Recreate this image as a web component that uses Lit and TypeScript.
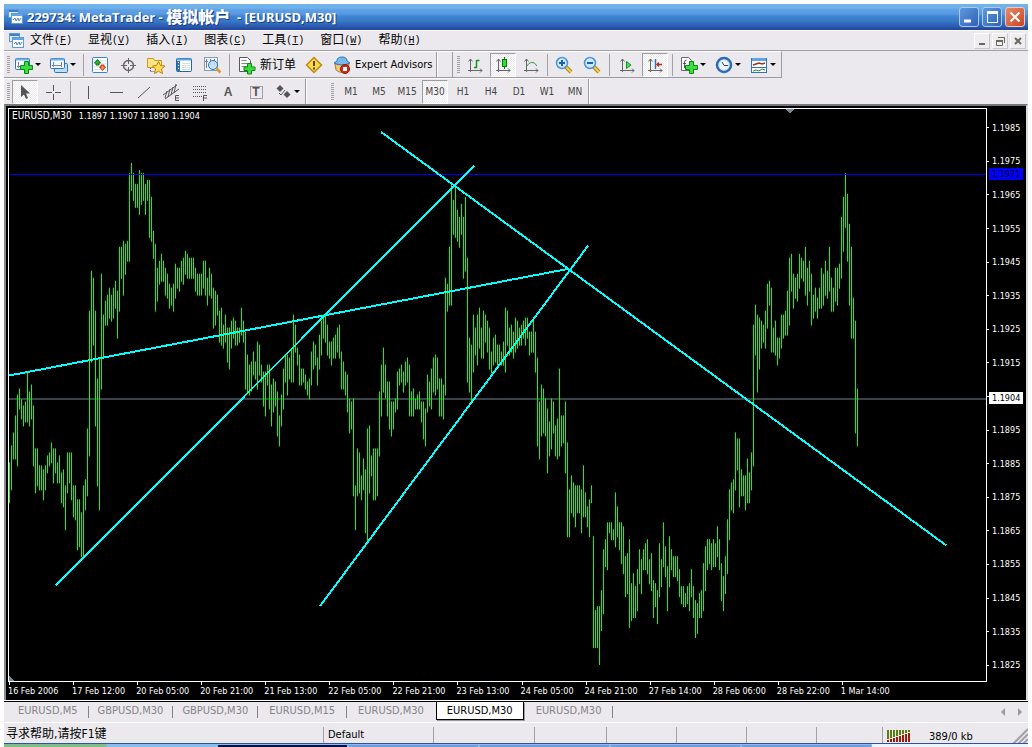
import { LitElement, html, css, svg, nothing, TemplateResult } from "lit";
import { customElement, property } from "lit/decorators.js";
import { classMap } from "lit/directives/class-map.js";

/* High/low pairs of every candle, oldest first, in chart canvas units. */
const BARS: number[] = [
  463,504,446,491,433,460,416,460,395,467,389,410,400,420,406,427,402,423,372,423,392,427,385,420,406,467,449,494,449,487,
  466,491,466,491,470,501,466,491,456,474,453,467,443,464,449,484,449,474,463,484,456,484,473,504,470,508,486,531,453,494,
  453,484,453,501,486,518,486,521,500,551,500,548,513,558,486,558,480,511,429,497,311,457,271,363,278,346,311,427,379,487,
  358,511,274,390,315,357,301,326,295,326,288,319,295,322,288,319,281,309,291,339,247,312,247,279,241,296,244,275,241,262,
  173,262,163,191,173,201,184,208,184,208,170,215,173,205,173,201,184,215,180,201,180,238,197,242,231,259,244,312,268,302,
  261,285,254,282,261,282,268,296,274,299,284,309,288,306,284,312,264,299,268,289,268,292,261,282,258,285,251,275,254,279,
  258,279,258,279,258,279,268,292,274,296,274,296,274,296,261,289,261,296,278,306,268,296,274,299,288,329,291,326,295,316,
  311,343,308,346,325,349,315,343,328,363,328,370,321,349,318,339,321,346,328,346,328,343,308,336,321,343,332,390,355,394,
  365,396,362,392,352,376,362,380,342,390,345,376,365,383,372,407,372,417,365,386,365,410,385,427,379,413,382,407,392,437,
  416,447,395,427,369,410,355,383,355,396,358,380,349,383,315,383,325,353,348,366,355,386,369,386,369,383,375,390,382,396,
  379,400,352,386,342,370,345,366,358,386,335,370,321,356,315,339,315,343,325,356,342,359,342,366,338,359,335,359,328,353,
  325,359,352,390,362,390,372,396,375,413,399,434,402,430,399,497,486,531,449,497,453,494,476,501,459,491,470,534,429,545,
  426,494,456,477,449,501,449,501,449,497,392,457,365,417,348,393,365,399,382,417,382,430,402,437,402,430,399,413,372,410,
  369,386,365,383,372,393,362,386,358,383,365,417,392,417,389,417,399,410,395,410,392,410,402,423,402,440,409,447,375,413,
  382,407,369,410,358,393,355,396,358,390,379,417,379,417,385,420,278,396,284,312,247,306,185,306,200,235,185,238,210,242,
  217,248,204,235,217,279,197,272,258,383,338,393,345,402,315,373,328,356,315,366,308,349,328,359,311,359,315,343,321,353,
  328,370,352,374,338,366,335,363,345,366,345,363,352,366,342,366,308,373,311,346,328,356,325,353,332,359,318,353,321,349,
  328,346,325,346,321,339,318,346,318,339,332,356,332,353,321,353,332,373,358,447,402,460,385,437,389,434,399,437,409,474,
  422,457,399,450,402,434,426,457,419,460,369,457,416,447,416,444,402,474,443,538,490,538,476,514,483,518,486,528,486,514,
  486,514,490,534,466,518,493,518,507,528,500,538,486,504,537,649,611,649,607,649,607,666,591,632,550,615,540,568,523,571,
  523,534,523,541,530,541,493,548,507,538,523,551,523,565,527,575,557,598,554,595,540,629,584,622,574,619,587,619,570,612,
  550,585,560,595,550,571,544,571,540,575,560,585,554,592,581,619,584,608,591,625,544,598,560,588,523,568,547,578,567,612,
  537,588,550,571,557,578,557,578,557,582,570,598,587,605,587,608,594,608,587,605,584,612,570,598,587,619,601,639,604,635,
  594,619,591,619,564,612,547,592,540,571,540,565,544,571,540,568,544,568,527,558,540,571,564,602,577,612,557,595,520,575,
  490,541,483,511,480,514,433,491,439,471,439,508,470,497,476,497,476,511,459,504,473,504,453,491,325,467,305,356,315,393,
  318,370,321,349,325,343,311,349,284,329,281,306,288,353,328,353,321,356,338,366,338,359,315,349,315,339,311,336,291,336,
  258,326,254,292,274,309,278,299,274,302,254,289,258,279,261,282,247,296,268,306,261,292,274,326,295,319,288,312,298,319,
  288,309,268,309,274,306,261,296,271,299,247,292,278,312,288,312,268,302,268,306,264,289,217,279,197,252,173,228,194,262,
  224,306,247,339,298,339,321,434,389,447,
];

const CANVAS = { left: 9, top: 109, width: 977, height: 573, step: 2 };

const BAR_PATH = Array.from({ length: BARS.length / 2 }, (_, i) =>
  `M${CANVAS.left + i * CANVAS.step + 0.5} ${BARS[2 * i]}V${BARS[2 * i + 1]}`).join("");

const TRENDS = [
  [9, 376, 569, 269],
  [56, 586, 474, 166],
  [381, 132, 946, 546],
  [320, 607, 588, 246],
];

const PRICES = Array.from({ length: 17 }, (_, i) => ((11985 - i * 10) / 10000).toFixed(4));
const TIMES = [
  "16 Feb 2006", "17 Feb 12:00", "20 Feb 05:00", "20 Feb 21:00", "21 Feb 13:00", "22 Feb 05:00", "22 Feb 21:00",
  "23 Feb 13:00", "24 Feb 05:00", "24 Feb 21:00", "27 Feb 14:00", "28 Feb 06:00", "28 Feb 22:00", "1 Mar 14:00",
];

const plus = svg`<path d="M10.500 6.500h4v4h4v4h-4v4h-4v-4h-4v-4h4z" fill="#3fdc3f" stroke="#078a12"/>`;
const axes = svg`<path d="M5.500 4v13M3 15.500h14" stroke="#666" fill="none"/><path d="M3.500 6.500l2-2.500 2 2.500M15 13.500l2 2-2 2" stroke="#666" fill="none"/>`;

const ICONS: Record<string, TemplateResult> = {
  app: svg`<rect x="3.500" y="2.500" width="10" height="8" fill="#dcecfb" stroke="#5d9bd8"/><path d="M4 4h9" stroke="#3e7fc6" stroke-width="2"/><rect x="6.500" y="6.500" width="11" height="10" fill="#fff" stroke="#5d9bd8"/><path d="M7 8h10" stroke="#62a5e4" stroke-width="2"/><path d="M8 13l2-2 1 3 2-3 1 3 2-3" fill="none" stroke="#4f86c4"/>`,
  newChart: svg`<rect x="1.500" y="3.500" width="14" height="11" rx="1" fill="#f4faff" stroke="#2f74b5"/><path d="M2 4.500h13" stroke="#6fb2ea" stroke-width="2"/><path d="M4.500 7v6M3 11.500h6M10.500 7v4" stroke="#7a8794" fill="none"/>${plus}`,
  profiles: svg`<rect x="5.500" y="8.500" width="13" height="9" rx="1" fill="#bfe0fa" stroke="#2f74b5"/><rect x="1.500" y="3.500" width="14" height="10" rx="1" fill="#f1f8ff" stroke="#2f74b5"/><path d="M2 4.500h13" stroke="#6fb2ea" stroke-width="2"/><path d="M4.500 7v5M3 10.500h10M12.500 7v5" stroke="#7a8794" fill="none"/>`,
  market: svg`<rect x="2.500" y="2.500" width="15" height="15" rx="1" fill="#fff" stroke="#2f86c8"/><path d="M4 5.500h12M4 8.500h12M4 11.500h12M4 14.500h12" stroke="#dce8f0"/><path d="M7.500 4.500l3 3.500h-1.500v2h-3v-2h-1.500z" fill="#27b327" stroke="#117a17"/><path d="M12.500 15.500l-3-3.500h1.500v-2h3v2h1.500z" fill="#ff8b5a" stroke="#c23510"/>`,
  target: svg`<circle cx="10.500" cy="10.500" r="5" fill="none" stroke="#666" stroke-width="1.500"/><path d="M10.500 3v6M10.500 12v6M3 10.500h6M12 10.500h6" stroke="#666"/>`,
  folderStar: svg`<path d="M1.500 3.500h6l1 2h7v7h-14z" fill="#ffe58a" stroke="#c89a1c"/><path d="M4.500 13v4M4.500 16.500h6" stroke="#555" stroke-dasharray="1 1"/><path d="M12.500 6.500l2 4 4.500.5-3.500 3 1 4.500-4-2.200-4 2.200 1-4.500-3-3 4-.5z" fill="#ffdb58" stroke="#b78110"/>`,
  navigator: svg`<rect x="2.500" y="3.500" width="15" height="13" rx="1" fill="#fff" stroke="#1d66ad"/><path d="M3 4.500h14" stroke="#5da6e8" stroke-width="2"/><path d="M4.500 6v10" stroke="#2f74b5" stroke-width="3"/><path d="M8 8.500h8M8 10.500h8M8 12.500h8M8 14.500h8" stroke="#d3dde6"/><path d="M4 7.500h1M4 10.500h1M4 13.500h1" stroke="#fff"/>`,
  tester: svg`<rect x="2.500" y="2.500" width="13" height="13" fill="#eef4fa" stroke="#8a9db0"/><path d="M4.500 4v9M3 6.500h3M8.500 4v6M12.500 4v6" stroke="#6d8094" fill="none"/><circle cx="11" cy="10" r="4.500" fill="#bfe0fa" fill-opacity=".85" stroke="#2f74b5"/><path d="M14.500 13.500l4 4" stroke="#d99b1d" stroke-width="2.500"/>`,
  order: svg`<path d="M2.500 2.500h8l3 3v11h-11z" fill="#fff" stroke="#556"/><path d="M4.500 5.500h5M4.500 8.500h7M4.500 11.500h5" stroke="#888"/><path d="M10.500 8.500h4v3.500h3.500v3.500h-3.500v3.500h-4v-3.500h-3.500v-3.500h3.500z" fill="#3fdc3f" stroke="#078a12"/>`,
  warning: svg`<path d="M10 2.500l7.500 7.500-7.500 7.500-7.500-7.500z" fill="#ffd84a" stroke="#b98a12" stroke-width="1.500"/><path d="M10 6v5M10 12.500v2" stroke="#5b4300" stroke-width="2"/>`,
  expert: svg`<path d="M3 9h14l-1 6q-6 5-12 0z" fill="#f3c87a" stroke="#b27d2b"/><path d="M2 8q8 4 16 0l-3-2q0-4-5-4t-5 4z" fill="#77b9ee" stroke="#2f74b5"/><circle cx="13" cy="14" r="4.500" fill="#d42b12" stroke="#8c1808"/><rect x="11" y="12" width="4" height="4" fill="#fff"/>`,
  bars: svg`${axes}<path d="M11.500 5v8M11.500 5.500h3M9 12.500h3" stroke="#14931b" stroke-width="1.500" fill="none"/>`,
  candles: svg`${axes}<path d="M11.500 2v12" stroke="#0a7a10"/><rect x="9.500" y="4.500" width="4" height="7" fill="#2fe02f" stroke="#0a7a10"/>`,
  line: svg`${axes}<path d="M5 12q6-9 11-1" stroke="#2c9b3b" fill="none"/>`,
  zoomIn: svg`<path d="M12 12l5 5" stroke="#b8860b" stroke-width="4"/><path d="M12 12l5 5" stroke="#f0d050" stroke-width="2"/><circle cx="8" cy="8" r="5.500" fill="#cfe8ff" stroke="#4a94d8" stroke-width="1.500"/><path d="M5 8h6M8 5v6" stroke="#1b62ac" stroke-width="2"/>`,
  zoomOut: svg`<path d="M12 12l5 5" stroke="#b8860b" stroke-width="4"/><path d="M12 12l5 5" stroke="#f0d050" stroke-width="2"/><circle cx="8" cy="8" r="5.500" fill="#cfe8ff" stroke="#4a94d8" stroke-width="1.500"/><path d="M5 8h6" stroke="#1b62ac" stroke-width="2"/>`,
  scroll: svg`${axes}<path d="M9.500 6.500l4.500 3.500-4.500 3.500z" fill="#4fdc5a" stroke="#14931b"/>`,
  shift: svg`${axes}<path d="M10.500 4v10" stroke="#2f74b5" stroke-width="1.500"/><path d="M12 9.500h5M14 7.500l-2 2 2 2" stroke="#b52d12" stroke-width="1.500" fill="none"/>`,
  indicators: svg`<path d="M2.500 2.500h7l3 3v10h-10z" fill="#fff" stroke="#667"/><path d="M7.500 5q-2 0-2 2v6M4 8.500h3" stroke="#555" fill="none"/>${plus}`,
  clock: svg`<circle cx="10" cy="10" r="7" fill="#eef6ff" stroke="#2b6cb8" stroke-width="2.500"/><circle cx="10" cy="10" r="5" fill="none" stroke="#9cb6cf" stroke-dasharray="1 2"/><path d="M8 7l2 3.500h4" stroke="#444" fill="none"/>`,
  template: svg`<rect x="2.500" y="3.500" width="15" height="14" fill="#fff" stroke="#2f74b5"/><path d="M3 4.500h14" stroke="#5da6e8" stroke-width="3"/><path d="M3 12.500h14" stroke="#2f74b5"/><path d="M4 10l3-1 3-1 3 1 3-1" stroke="#a03020" stroke-width="1.500" fill="none"/><path d="M4 16l3-1 3 1 3-2 3 1" stroke="#239435" fill="none"/>`,
  cursor: svg`<path d="M6 3v12l3-2.500 2 4.500 2-1-2-4.500h4z" fill="#555"/>`,
  cross: svg`<path d="M10.500 3v6M10.500 12v6M3 10.500h6M12 10.500h6" stroke="#555"/>`,
  vline: svg`<path d="M10.500 4v13" stroke="#555"/>`,
  hline: svg`<path d="M4 10.500h13" stroke="#555"/>`,
  trend: svg`<path d="M4 16l12-11" stroke="#555"/>`,
  channel: svg`<path d="M1 13L15 3M3 17L17 7M5 9l-2 7M8 7l-2 8M11 5l-2 8M14 2l-2 9" stroke="#555" fill="none"/><path d="M17 13.500h-3.500v5H17M14 16h3" stroke="#555" fill="none"/>`,
  fibo: svg`<path d="M3 4.500h14M3 7.500h14M3 10.500h14M3 14.500h9" stroke="#555" stroke-dasharray="1 1"/><path d="M17 13.500h-3.500v5.500M14 16h3" stroke="#555" fill="none"/>`,
  label: svg`<rect x="4.500" y="4.500" width="12" height="12" fill="none" stroke="#555" stroke-dasharray="1 1"/>`,
  arrows: svg`<path d="M7 3l3.500 3.500L7 10 3.500 6.500z" fill="#555"/><path d="M6 11l2 2 4-5" stroke="#555" fill="none"/><path d="M14 9l3.500 3.500L14 16l-3.500-3.500z" fill="#555"/>`,
};

@customElement("tool-button")
class ToolButton extends LitElement {
  @property() icon = "";
  @property() label = "";
  @property() text = "";
  @property() glyph = "";
  @property({ type: Boolean }) pressed = false;
  @property({ type: Boolean }) menu = false;

  static styles = css`
    :host { display: flex; align-items: center; justify-content: center; width: 28px; flex: none; }
    :host([menu]) { width: 35px; }
    :host([text]) { width: auto; }
    button {
      all: unset; box-sizing: border-box; display: flex; align-items: center; justify-content: center;
      width: 26px; height: 24px; color: #000; position: relative; white-space: nowrap;
    }
    .menu { width: 35px; justify-content: flex-start; padding-left: 3px; gap: 1px; }
    .text { width: auto; padding: 0 4px; gap: 3px; }
    .pressed {
      border: 1px solid; border-color: #9d9da1 #fff #fff #9d9da1;
      background: repeating-conic-gradient(#ebe9ed 0 25%, #fff 0 50%) 0 0 / 2px 2px;
    }
    svg { display: block; flex: none; }
    .arrow { border: 3px solid transparent; border-top-color: #000; border-bottom-width: 0; }
    .glyph { position: absolute; inset: 0; display: grid; place-items: center; color: #555; font: bold 12px "Liberation Sans", sans-serif; }
  `;

  render() {
    return html`<button aria-label=${this.label || this.text} aria-pressed=${this.pressed}
      class=${classMap({ pressed: this.pressed, menu: this.menu, text: !!this.text })}>
      <svg width="20" height="20" viewBox="0 0 20 20">${ICONS[this.icon] ?? nothing}</svg>
      ${this.text ? html`<span>${this.text}</span>` : nothing}
      ${this.glyph ? html`<span class="glyph">${this.glyph}</span>` : nothing}
      ${this.menu ? html`<span class="arrow"></span>` : nothing}
    </button>`;
  }
}

@customElement("price-chart")
class PriceChart extends LitElement {
  static styles = css`
    :host {
      display: grid; grid-template: minmax(0, 1fr) 18px / minmax(0, 1fr) 39px; padding: 2px 0 0 2px;
      background: #000; color: #fff; font-size: 9px; line-height: 12px; position: relative;
      border: solid; border-width: 2px 2px 0 2px; border-color: #77777b #dcdade #000 #8c8c90;
    }
    .plot { border: 1px solid #fff; display: flex; min-height: 0; }
    .plot svg { flex: 1; min-width: 0; height: 100%; display: block; shape-rendering: crispEdges; }
    path, line { vector-effect: non-scaling-stroke; }
    .bars { stroke: #0f0; fill: none; }
    .trend { stroke: #0ff; stroke-width: 2; }
    .info { position: absolute; left: 6px; top: 4px; display: flex; gap: 7px; }
    .symbol { font-size: 10px; }
    .prices { position: relative; display: grid; grid-template-rows: repeat(17, minmax(0, 1fr)); padding-top: 3px; }
    .price { display: flex; align-items: center; gap: 3px; }
    .price::before { content: ""; width: 2px; height: 1px; background: #fff; }
    .badge { position: absolute; left: 2px; width: 34px; height: 12px; margin-top: -6px; padding-left: 3px; box-sizing: border-box; }
    .bid { background: #fff; color: #000; }
    .level { background: #00f; color: #000; }
    .times { display: grid; grid-template-columns: repeat(14, minmax(0, 64fr)) 81fr; padding-left: 1px; }
    .time { position: relative; white-space: nowrap; padding-top: 3px; margin-left: -1px; }
    .time::before { content: ""; position: absolute; left: 1px; top: 0; width: 1px; height: 3px; background: #fff; }
  `;

  private offset(y: number) {
    return `top:${((y - CANVAS.top + 1) / (CANVAS.height + 2)) * 100}%`;
  }

  render() {
    const { left, top, width, height } = CANVAS;
    return html`
      <div class="plot">
        <svg viewBox="${left} ${top} ${width} ${height}" preserveAspectRatio="none" role="img" aria-label="EURUSD,M30">
          <line x1=${left} y1="399.5" x2=${left + width} y2="399.5" stroke="#778899"></line>
          <path class="bars" d=${BAR_PATH}></path>
          <line x1=${left} y1="174.5" x2=${left + width} y2="174.5" stroke="#00f"></line>
          ${TRENDS.map(([x1, y1, x2, y2]) => svg`<line class="trend" x1=${x1} y1=${y1} x2=${x2} y2=${y2}></line>`)}
          <path d="M785 109h10l-5 5z M9 677l5 5h-5z" fill="#778899"></path>
        </svg>
      </div>
      <div class="prices">
        ${PRICES.map((p) => html`<div class="price">${p === "1.1905" ? nothing : p}</div>`)}
        <div class="badge level" style=${this.offset(174)}>1.1971</div>
        <div class="badge bid" style=${this.offset(399)}>1.1904</div>
      </div>
      <div class="times">${TIMES.map((t) => html`<div class="time">${t}</div>`)}</div>
      <div class="info"><span class="symbol">EURUSD,M30</span><span>1.1897 1.1907 1.1890 1.1904</span></div>
    `;
  }
}

@customElement("app-root")
class AppRoot extends LitElement {
  static styles = css`
    :host {
      display: flex; flex-direction: column; box-sizing: border-box; height: 100vh; min-height: 400px; padding: 4px 4px 0;
      background: #fff; overflow: hidden; color: #000;
      font: 11px/14px "DejaVu Sans Condensed", "Noto Sans CJK SC", sans-serif;
    }
    button { all: unset; box-sizing: border-box; }
    .title {
      display: flex; align-items: center; height: 26px; flex: none; padding: 0 3px 0 1px; box-sizing: border-box; color: #fff;
      background: linear-gradient(#6fb4ea 0, #70b2ea 4px, #5f9fe6 6px, #5a99e2 10px, #3f86d4 12px, #3878c8 17px, #2c5cb0 22px, #2850a6 24px, #1f4495 26px);
    }
    .caption { display: flex; align-items: center; flex: 1; margin: 0 0 0 2px; white-space: pre; font: bold 13px/20px "Open Sans", "Noto Sans CJK SC", sans-serif; text-shadow: 1px 1px 0 #1a3d86; }
    .caption b { font-size: 16px; }
    .winbtns { display: flex; gap: 3px; }
    .win { width: 20px; height: 20px; border: 1px solid #a9c9ee; border-radius: 3px; background: linear-gradient(135deg, #5e9ade, #2f62b4); }
    .close { background: linear-gradient(135deg, #e98a68, #cc4420); border-color: #f0c8bc; }
    svg { display: block; }
    .menubar { display: flex; align-items: center; height: 20px; flex: none; padding: 0 2px 0 3px; background: #ebe9ed; border-top: 1px solid #fff; box-sizing: border-box; }
    .menubar, .status, .order { font-size: 12px; }
    .menus { display: flex; flex: 1; gap: 16px; padding: 0 0 3px 3px; font-family: "Noto Sans CJK SC", sans-serif; }
    .menus button { display: flex; align-items: center; }
    .key { font: 10px/14px "Liberation Mono", monospace; padding-top: 3px; }
    .mdi { display: flex; gap: 2px; }
    .mdi button { width: 16px; height: 16px; background: #efedf0; border: 1px solid; border-color: #fff #c9c7cb #c9c7cb #fff; }
    .bars { background: #ebe9ed; border-top: 1px solid #a3a1a5; flex: none; }
    .row { display: flex; width: max-content; height: 25px; border-top: 1px solid #fff; }
    .first { border-bottom: 1px solid #9d9b9f; border-right: 1px solid #9d9b9f; }
    .group { display: flex; align-items: center; padding-left: 3px; }
    .ends { border-right: 1px solid #9d9b9f; box-shadow: 1px 0 #fff; }
    .starts { border-left: 1px solid #9d9b9f; margin-left: 15px; padding-left: 4px; }
    .starts2 { margin-left: 22px; }
    .grip { width: 3px; height: 18px; margin-right: 1px; background: repeating-linear-gradient(#a3a1a5 0 1px, #ebe9ed 1px 2px); }
    .sep { width: 1px; height: 22px; background: #a3a1a5; margin: 0 2px; }
    .wide { margin: 0 3px; }
    .frames { gap: 2px; }
    .frame { width: 26px; height: 24px; display: grid; place-items: center; color: #444; font-size: 10px; }
    .frame.on { border: 1px solid; border-color: #9d9da1 #fff #fff #9d9da1; background: repeating-conic-gradient(#ebe9ed 0 25%, #fff 0 50%) 0 0 / 2px 2px; }
    price-chart { flex: 1; min-height: 0; }
    .tabs { display: flex; height: 22px; flex: none; background: #ebe9ed; margin-top: 1px; border-top: 1px solid #000; border-bottom: 1px solid #fff; box-sizing: border-box; }
    .tab { padding: 0 9px; height: 18px; color: #858387; display: flex; align-items: center; position: relative; font-size: 11px; }
    .tab.eur { padding: 0 11px; }
    .tab + .tab { margin-left: 1px; }
    .tab.bar::after { content: ""; position: absolute; right: -1px; top: 4px; width: 1px; height: 12px; background: #858387; }
    .tab.first-tab { padding: 0 10px 0 14px; }
    .tab.on { background: #fff; color: #000; border: 1px solid #000; border-top: 0; padding: 0 10px; box-shadow: 1px 1px #9d9b9f; }
    .scroll { margin-left: auto; display: flex; align-items: center; padding-right: 6px; gap: 13px; }
    .left, .right { border: 4px solid transparent; border-right-color: #9a989c; border-left-width: 0; }
    .right { border-width: 4px 0 4px 4px; border-left-color: #9a989c; }
    .status {
      display: grid; height: 20px; flex: none; background: #ebe9ed;
      grid-template-columns: minmax(0, 319fr) minmax(0, 110fr) minmax(0, 101fr) minmax(0, 72fr) repeat(3, minmax(0, 70fr)) minmax(0, 66fr) minmax(0, 146fr);
    }
    .cell { border-left: 1px solid #a3a1a5; margin-top: 4px; line-height: 15px; font-size: 11px; padding-left: 4px; }
    .help { padding-left: 2px; white-space: nowrap; line-height: 22px; }
    .net { display: flex; align-items: center; gap: 18px; }
    .size { margin-left: auto; }
    .taskbar { display: flex; height: 4px; flex: none; background: #84bfee; border-top: 1px solid #2d52a8; box-sizing: border-box; }
    .start { flex: 97; background: #7cc084; border-radius: 0 3px 0 0; }
    .task { flex: 122; height: 2px; margin: 0 1px; background: #6f9fe0; align-self: end; }
    .dark { background: #0a1046; }
    .gap { flex: 104; }
    .tray { flex: 147; background: #eaf5fd; }
  `;

  private menus: [string, string][] = [["文件", "F"], ["显视", "V"], ["插入", "I"], ["图表", "C"], ["工具", "T"], ["窗口", "W"], ["帮助", "H"]];
  private frames = ["M1", "M5", "M15", "M30", "H1", "H4", "D1", "W1", "MN"];
  private tabs = ["EURUSD,M5", "GBPUSD,M30", "GBPUSD,M30", "EURUSD,M15", "EURUSD,M30", "EURUSD,M30", "EURUSD,M30"];

  private signal() {
    return svg`<svg width="24" height="13" viewBox="0 0 24 13" shape-rendering="crispEdges">${Array.from({ length: 8 }, (_, i) => {
      const h = 2 + i;
      return svg`<rect x=${i * 3} y="0" width="2" height=${12 - h - 1} fill="#5a7d0c"></rect><rect x=${i * 3} y=${12 - h} width="2" height=${h} fill="#9c1c08"></rect>`;
    })}</svg>`;
  }

  render() {
    return html`
      <header class="title">
        <svg width="20" height="20" viewBox="0 0 20 20">${ICONS.app}</svg>
        <h1 class="caption"><span>229734: MetaTrader - </span><b>模拟帐户</b><span>  - [EURUSD,M30]</span></h1>
        <div class="winbtns">
          <button class="win" aria-label="Minimize"><svg width="18" height="18"><path d="M4 13h7" stroke="#fff" stroke-width="3"/></svg></button>
          <button class="win" aria-label="Maximize"><svg width="18" height="18"><path d="M4 4.500h11" stroke="#fff" stroke-width="3"/><path d="M4.500 4v10.500h10V4" fill="none" stroke="#fff"/></svg></button>
          <button class="win close" aria-label="Close"><svg width="18" height="18"><path d="M4.500 4.500l9 9M13.500 4.500l-9 9" stroke="#fff" stroke-width="2"/></svg></button>
        </div>
      </header>
      <nav class="menubar">
        <svg width="20" height="18" viewBox="1 1 20 18">${ICONS.app}</svg>
        <div class="menus">${this.menus.map(([t, k]) => html`<button>${t}<span class="key">(<u>${k}</u>)</span></button>`)}</div>
        <div class="mdi">
          <button aria-label="Minimize chart"><svg width="14" height="14"><path d="M4 10h6" stroke="#6b6860" stroke-width="2"/></svg></button>
          <button aria-label="Restore chart"><svg width="14" height="14"><path d="M5 3.500h7M11.500 4v5M3 6.500h7" stroke="#6b6860" stroke-width="1" fill="none"/><path d="M3.500 6v5.500h6v-5M3 7.500h7" stroke="#6b6860" fill="none"/></svg></button>
          <button aria-label="Close chart"><svg width="14" height="14"><path d="M4 4l6 6M10 4l-6 6" stroke="#6b6860" stroke-width="2"/></svg></button>
        </div>
      </nav>
      <div class="bars">
        <div class="row first">
          <div class="group ends">
            <span class="grip"></span>
            <tool-button icon="newChart" label="New chart" menu></tool-button>
            <tool-button icon="profiles" label="Profiles" menu></tool-button>
            <span class="sep"></span>
            <tool-button icon="market" label="Market Watch"></tool-button>
            <tool-button icon="target" label="Data Window"></tool-button>
            <tool-button icon="folderStar" label="Navigator"></tool-button>
            <tool-button icon="navigator" label="Terminal"></tool-button>
            <tool-button icon="tester" label="Strategy Tester"></tool-button>
            <span class="sep wide"></span>
            <tool-button class="order" icon="order" text="新订单"></tool-button>
            <tool-button icon="warning" label="MetaEditor"></tool-button>
            <tool-button icon="expert" text="Expert Advisors"></tool-button>
          </div>
          <div class="group starts">
            <span class="grip"></span>
            <tool-button icon="bars" label="Bar chart"></tool-button>
            <tool-button icon="candles" label="Candlesticks" pressed></tool-button>
            <tool-button icon="line" label="Line chart"></tool-button>
            <span class="sep"></span>
            <tool-button icon="zoomIn" label="Zoom in"></tool-button>
            <tool-button icon="zoomOut" label="Zoom out"></tool-button>
            <span class="sep wide"></span>
            <tool-button icon="scroll" label="Auto scroll"></tool-button>
            <tool-button icon="shift" label="Chart shift" pressed></tool-button>
            <span class="sep wide"></span>
            <tool-button icon="indicators" label="Indicators" menu></tool-button>
            <tool-button icon="clock" label="Periods" menu></tool-button>
            <tool-button icon="template" label="Templates" menu></tool-button>
          </div>
        </div>
        <div class="row">
          <div class="group ends">
            <span class="grip"></span>
            <tool-button icon="cursor" label="Cursor" pressed></tool-button>
            <tool-button icon="cross" label="Crosshair"></tool-button>
            <span class="sep wide"></span>
            <tool-button icon="vline" label="Vertical line"></tool-button>
            <tool-button icon="hline" label="Horizontal line"></tool-button>
            <tool-button icon="trend" label="Trendline"></tool-button>
            <tool-button icon="channel" label="Channel"></tool-button>
            <tool-button icon="fibo" label="Fibonacci"></tool-button>
            <tool-button glyph="A" label="Text"></tool-button>
            <tool-button icon="label" glyph="T" label="Text label"></tool-button>
            <tool-button icon="arrows" label="Arrows" menu></tool-button>
          </div>
          <div class="group starts2 ends">
            <span class="grip"></span>
            <div class="group frames">${this.frames.map((f) => html`<button class=${classMap({ frame: true, on: f === "M30" })}>${f}</button>`)}</div>
          </div>
        </div>
      </div>
      <price-chart></price-chart>
      <div class="tabs" role="tablist">
        ${this.tabs.map((t, i) => html`<button role="tab" aria-selected=${i === 5}
          class=${classMap({ tab: true, eur: t.startsWith("EUR"), on: i === 5, bar: i !== 5 && i !== 4, "first-tab": i === 0 })}>${t}</button>`)}
        <div class="scroll"><span class="left"></span><span class="right"></span></div>
      </div>
      <footer class="status">
        <span class="help">寻求帮助,请按F1键</span>
        <span class="cell">Default</span>
        <span class="cell"></span><span class="cell"></span><span class="cell"></span>
        <span class="cell"></span><span class="cell"></span><span class="cell"></span>
        <span class="cell net">${this.signal()}<span>389/0 kb</span>
          <svg class="size" width="16" height="16"><path d="M1 16L16 1M6 16L16 6M11 16l5-5" stroke="#a3a1a5" stroke-width="2"/></svg></span>
      </footer>
      <div class="taskbar">
        <span class="start"></span><span class="gap"></span><span class="task dark"></span>
        <span class="task"></span><span class="task"></span><span class="task"></span><span class="task"></span>
        <span class="tray"></span>
      </div>
    `;
  }
}
